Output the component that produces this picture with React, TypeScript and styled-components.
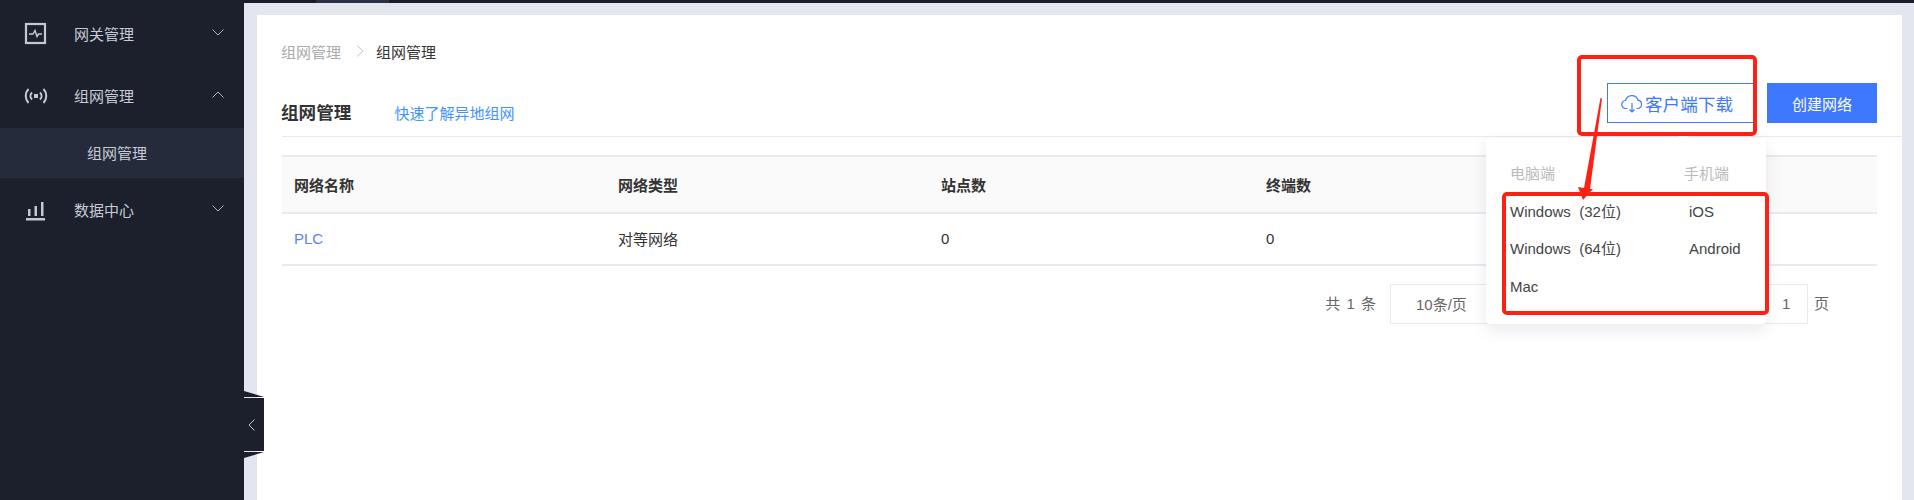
import React from 'react';
import styled, { createGlobalStyle } from 'styled-components';

const FONT = `"Liberation Sans", "Noto Sans CJK SC", sans-serif`;
const BLUE = '#3e78ff';
const LINE = '#e8eaf1';

const GlobalStyle = createGlobalStyle`
  html, body {
    margin: 0;
    padding: 0;
    background: #e3e6ee;
  }
  * {
    box-sizing: border-box;
  }
`;

const Page = styled.div`
  position: relative;
  display: flex;
  width: 1914px;
  height: 500px;
  overflow: hidden;
  font-family: ${FONT};
  font-size: 15px;
  color: #333;
`;

const Sidebar = styled.aside`
  flex: 0 0 244px;
  padding-top: 3px;
  background: #1b202c;
  color: #c6cbd6;
`;

const MenuItem = styled.div`
  display: flex;
  align-items: center;
  height: 62px;
  padding: 0 20px 0 24px;
`;

const MenuIcon = styled.svg`
  flex: 0 0 24px;
  width: 24px;
  height: 24px;
  margin-right: 26px;
`;

const MenuLabel = styled.span`
  flex: 1;
  margin-top: -2px;
  font-size: 15px;
`;

const Caret = styled.svg<{ $up?: boolean }>`
  width: 12px;
  height: 7px;
  margin-top: -4px;
  transform: ${props => (props.$up ? 'rotate(180deg)' : 'none')};
`;

const SubItem = styled.div`
  display: flex;
  align-items: center;
  height: 50px;
  margin: 1px 0;
  padding: 0 0 2px 87px;
  background: #252b3b;
  font-size: 15px;
`;

const Main = styled.main`
  flex: 1;
  display: flex;
  flex-direction: column;
  min-width: 0;
`;

const TopStrip = styled.div`
  flex: 0 0 3px;
  padding-left: 72px;
  background: #191d2b;
`;

const TopTab = styled.div`
  width: 73px;
  height: 3px;
  background: #2b3047;
`;

const Content = styled.div`
  flex: 1;
  display: flex;
  padding: 12px 12px 0 13px;
  background: #e3e6ee;
`;

const Card = styled.section`
  flex: 1;
  padding: 25px 0 0 25px;
  background: #fff;
`;

const Breadcrumb = styled.nav`
  display: flex;
  align-items: center;
  height: 22px;
  margin-left: -1px;
`;

const Crumb = styled.span<{ $current?: boolean }>`
  color: ${props => (props.$current ? '#333' : '#aaa')};
`;

const CrumbSep = styled.svg`
  width: 8px;
  height: 12px;
  margin: 0 12px 0 15px;
`;

const Header = styled.header`
  display: flex;
  align-items: center;
  height: 75px;
  padding: 21px 25px 13px 0;
  border-bottom: 1px solid ${LINE};
`;

const Title = styled.h1`
  margin: 17px 43px 0 -1px;
  font-size: 17.6px;
  font-weight: 700;
  color: #333;
`;

const HelpLink = styled.a`
  flex: 1;
  margin-top: 18px;
  color: #3d94ff;
`;

const OutlineButton = styled.button`
  display: flex;
  align-items: center;
  justify-content: flex-start;
  width: 150px;
  height: 40px;
  margin-right: 10px;
  padding: 0 0 0 13px;
  border: 1px solid ${BLUE};
  background: #fff;
  color: ${BLUE};
  font-family: ${FONT};
  font-size: 17.6px;
`;

const CloudIcon = styled.svg`
  width: 22px;
  height: 20px;
  margin-right: 2px;
  margin-top: 2px;
`;

const PrimaryButton = styled.button`
  width: 110px;
  height: 40px;
  border: 0;
  background: ${BLUE};
  color: #fff;
  font-family: ${FONT};
  font-size: 15px;
`;

const Table = styled.div`
  margin: 18px 25px 0 0;
`;

const Row = styled.div<{ $head?: boolean }>`
  display: grid;
  grid-template-columns: 324px 323px 325px 1fr;
  align-items: center;
  height: ${props => (props.$head ? '59px' : '52px')};
  padding-bottom: ${props => (props.$head ? '0' : '2px')};
  border-bottom: 2px solid ${LINE};
  border-top: ${props => (props.$head ? `2px solid ${LINE}` : '0')};
  background: ${props => (props.$head ? '#fafafa' : '#fff')};
  font-weight: ${props => (props.$head ? 700 : 400)};
`;

const Cell = styled.div<{ $link?: boolean }>`
  padding-left: 12px;
  color: ${props => (props.$link ? '#5b7ff5' : '#333')};
`;

const Pagination = styled.div`
  display: flex;
  align-items: center;
  justify-content: flex-end;
  height: 40px;
  margin: 18px 94px 0 0;
  color: #666;
`;

const Total = styled.span`
  margin: -3px 13px 0 0;
  letter-spacing: 1px;
`;

const SizeSelect = styled.div`
  display: flex;
  align-items: center;
  width: 130px;
  height: 40px;
  margin-right: 228px;
  padding: 0 0 2px 25px;
  border: 1px solid ${LINE};
  background: #fff;
`;

const PageInput = styled.div`
  display: flex;
  align-items: center;
  width: 60px;
  height: 40px;
  padding: 0 0 2px 33px;
  border: 1px solid ${LINE};
  background: #fff;
`;

const PageUnit = styled.span`
  margin: -3px -21px 0 6px;
`;

const Popover = styled.div`
  position: absolute;
  left: 1486px;
  top: 138px;
  display: grid;
  grid-template-columns: 174px 1fr;
  grid-template-rows: 22px repeat(3, 37.5px);
  align-items: center;
  width: 280px;
  height: 186px;
  padding: 24px 0 0 24px;
  border-radius: 4px;
  background: #fff;
  box-shadow: 0 6px 16px rgba(40, 50, 80, 0.1);

  &::before {
    content: '';
    position: absolute;
    left: 192px;
    top: -4px;
    width: 10px;
    height: 10px;
    background: #fff;
    transform: rotate(45deg);
  }
`;

const PopHead = styled.div`
  margin-top: -2px;
  color: #bbb;
`;

const PopLink = styled.div<{ $mobile?: boolean }>`
  position: relative;
  top: 9px;
  padding-left: ${props => (props.$mobile ? '5px' : '0')};
  color: #444;
  line-height: 20px;
  white-space: nowrap;
`;

const Mark = styled.div<{ $x: number; $y: number; $w: number; $h: number }>`
  position: absolute;
  left: ${props => props.$x}px;
  top: ${props => props.$y}px;
  width: ${props => props.$w}px;
  height: ${props => props.$h}px;
  border: 4px solid #ff2015;
  border-radius: 5px;
`;

const MarkArrow = styled.svg`
  position: absolute;
  left: 1570px;
  top: 90px;
  width: 40px;
  height: 115px;
`;

const Collapse = styled.div`
  position: absolute;
  left: 244px;
  top: 398px;
  display: flex;
  align-items: center;
  justify-content: flex-start;
  width: 20px;
  height: 53px;
  padding-left: 4px;
  background: #1b202c;

  &::before,
  &::after {
    content: '';
    position: absolute;
    left: 0;
    width: 20px;
    height: 6px;
    background: #1b202c;
  }

  &::before {
    top: -7px;
    clip-path: polygon(0 0, 100% 100%, 0 100%);
  }

  &::after {
    bottom: -7px;
    clip-path: polygon(0 0, 100% 0, 0 100%);
  }
`;

const CollapseIcon = styled.svg`
  width: 7px;
  height: 12px;
`;

const CaretGlyph: React.FC<{ up?: boolean }> = ({ up }) => (
  <Caret $up={up} viewBox="0 0 12 7" fill="none" stroke="#aeb4c0" strokeWidth="1">
    <path d="M.5.5 6 6 11.5.5" />
  </Caret>
);

const App: React.FC = () => {
  return (
    <Page>
      <GlobalStyle />
      <Sidebar>
        <MenuItem>
          <MenuIcon viewBox="0 0 24 24" fill="none" stroke="#c4c8d2" strokeWidth="2.200">
            <rect x="2" y="2" width="19" height="19" />
            <path d="M5 12h4l2-3.500 2 6 1.500-2.500H18" strokeWidth="1.500" />
          </MenuIcon>
          <MenuLabel>网关管理</MenuLabel>
          <CaretGlyph />
        </MenuItem>
        <MenuItem>
          <MenuIcon viewBox="0 0 24 24" fill="none" stroke="#c4c8d2" strokeWidth="2">
            <path d="M4.500 5C.8 9 .8 15 4.500 19M19.500 5c3.700 4 3.700 10 0 14M8 8.500c-2 2-2 5 0 7M16 8.500c2 2 2 5 0 7" />
            <rect x="10" y="10" width="4" height="4" fill="#c4c8d2" stroke="none" />
          </MenuIcon>
          <MenuLabel>组网管理</MenuLabel>
          <CaretGlyph up />
        </MenuItem>
        <SubItem>组网管理</SubItem>
        <MenuItem>
          <MenuIcon viewBox="0 0 24 24" fill="#c4c8d2">
            <rect x="2" y="20" width="19" height="2.500" />
            <rect x="4" y="11" width="2.500" height="7" />
            <rect x="10.500" y="8" width="2.500" height="10" />
            <rect x="17" y="4" width="2.500" height="14" />
          </MenuIcon>
          <MenuLabel>数据中心</MenuLabel>
          <CaretGlyph />
        </MenuItem>
      </Sidebar>

      <Main>
        <TopStrip>
          <TopTab />
        </TopStrip>
        <Content>
          <Card>
            <Breadcrumb>
              <Crumb>组网管理</Crumb>
              <CrumbSep viewBox="0 0 8 12" fill="none" stroke="#c4c4c4" strokeWidth="1">
                <path d="M1 .5 7 6l-6 5.500" />
              </CrumbSep>
              <Crumb $current>组网管理</Crumb>
            </Breadcrumb>
            <Header>
              <Title>组网管理</Title>
              <HelpLink>快速了解异地组网</HelpLink>
              <OutlineButton>
                <CloudIcon viewBox="0 0 22 20" fill="none" stroke={BLUE} strokeWidth="1.200">
                  <path d="M6.500 14.500H5a4 4 0 0 1-.5-8A6.500 6.500 0 0 1 17 6.200a4.200 4.200 0 0 1 0 8.300h-1.500" />
                  <path d="M11 9v9M8.500 15.500 11 18l2.500-2.500" />
                </CloudIcon>
                客户端下载
              </OutlineButton>
              <PrimaryButton>创建网络</PrimaryButton>
            </Header>
            <Table>
              <Row $head>
                <Cell>网络名称</Cell>
                <Cell>网络类型</Cell>
                <Cell>站点数</Cell>
                <Cell>终端数</Cell>
              </Row>
              <Row>
                <Cell $link>PLC</Cell>
                <Cell>对等网络</Cell>
                <Cell>0</Cell>
                <Cell>0</Cell>
              </Row>
            </Table>
            <Pagination>
              <Total>共 1 条</Total>
              <SizeSelect>10条/页</SizeSelect>
              <PageInput>1</PageInput>
              <PageUnit>页</PageUnit>
            </Pagination>
          </Card>
        </Content>
      </Main>

      <Collapse>
        <CollapseIcon viewBox="0 0 7 12" fill="none" stroke="#b9c4d4" strokeWidth="1">
          <path d="M6.500.5 1 6l5.500 5.500" />
        </CollapseIcon>
      </Collapse>

      <Popover>
        <PopHead>电脑端</PopHead>
        <PopHead>手机端</PopHead>
        <PopLink>Windows{'\u00a0\u00a0'}(32位)</PopLink>
        <PopLink $mobile>iOS</PopLink>
        <PopLink>Windows{'\u00a0\u00a0'}(64位)</PopLink>
        <PopLink $mobile>Android</PopLink>
        <PopLink>Mac</PopLink>
      </Popover>

      <Mark $x={1577} $y={55} $w={180} $h={81} />
      <Mark $x={1502} $y={192} $w={267} $h={123} />
      <MarkArrow viewBox="0 0 40 115" fill="#ff2015">
        <polygon points="30.500,8 32,8.500 20,99 23,99 13,110 8,97 14,98" />
      </MarkArrow>
    </Page>
  );
};

export default App;
